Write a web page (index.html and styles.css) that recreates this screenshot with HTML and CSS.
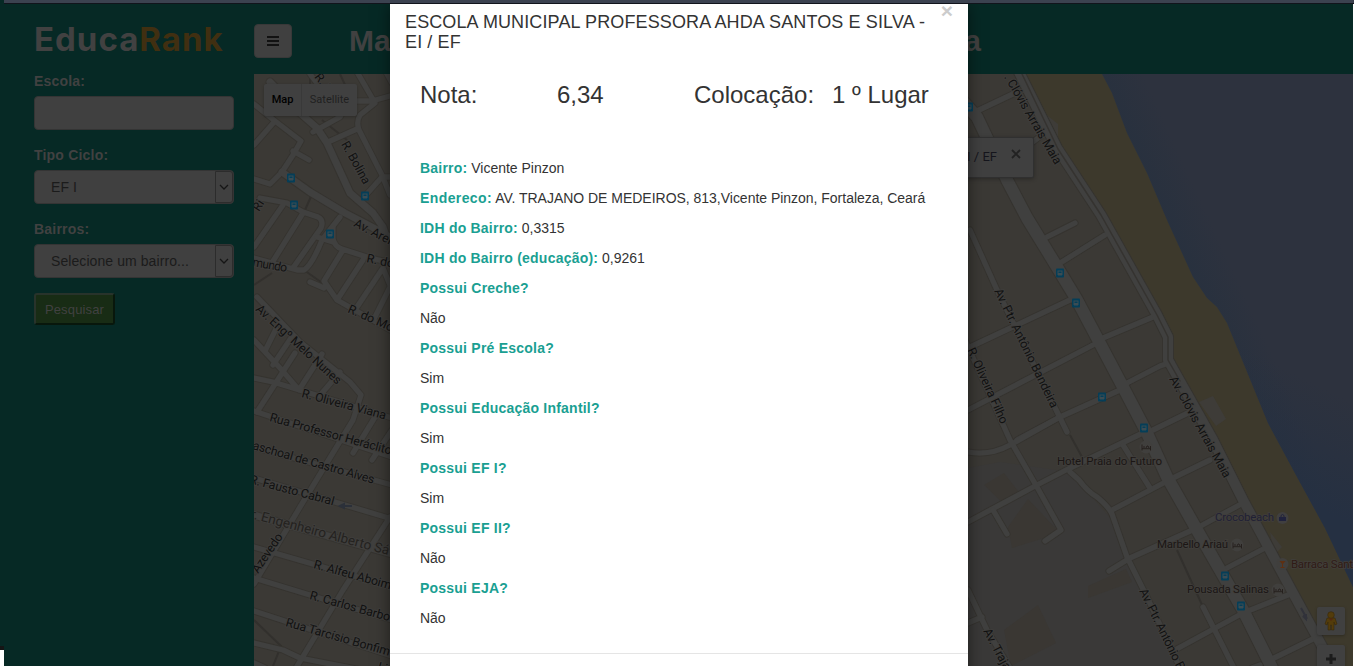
FILE: index.html
```html
<!DOCTYPE html>
<html lang="pt-BR">
<head>
<meta charset="utf-8">
<title>EducaRank</title>
<link rel="stylesheet" href="styles.css">
</head>
<body>
<div class="page">
  <div class="strip"></div>
  <aside class="sidebar">
    <div class="logo">Educa<span class="logo-accent">Rank</span></div>
    <label class="label">Escola:</label>
    <div class="field"></div>
    <label class="label">Tipo Ciclo:</label>
    <div class="field select"><span>EF I</span><i class="arrow"><svg width="10" height="6" viewBox="0 0 10 6"><path d="M1 1l4 4 4-4"/></svg></i></div>
    <label class="label">Bairros:</label>
    <div class="field select"><span>Selecione um bairro...</span><i class="arrow"><svg width="10" height="6" viewBox="0 0 10 6"><path d="M1 1l4 4 4-4"/></svg></i></div>
    <button class="search">Pesquisar</button>
  </aside>
  <main class="main">
    <header class="topbar">
      <div class="menu"><i></i><i></i><i></i></div>
      <h1 class="title"><span>Ma</span><span>a</span></h1>
    </header>
    <div class="map">
      <svg class="map-art" width="1099" height="592" viewBox="254 74 1099 592">
        <defs>
          <linearGradient id="sea" gradientUnits="userSpaceOnUse" x1="1150" y1="260" x2="1215" y2="230">
            <stop offset="0" stop-color="#24303f"/><stop offset="1" stop-color="#2d323e"/>
          </linearGradient>
          <linearGradient id="sea2" gradientUnits="userSpaceOnUse" x1="1300" y1="500" x2="1350" y2="400">
            <stop offset="0" stop-color="#253042" /><stop offset="1" stop-color="#253042" stop-opacity="0"/>
          </linearGradient>
          <g id="bus">
            <rect x="-4" y="-4.5" width="8" height="9" rx="1" fill="#053e58"/>
            <path d="M-2.5-2.5h5v4.500h-1v1h-1v-1h-1v1h-1v-1h-1z" fill="#3b4c53"/>
            <path d="M-1.500-1.500h3v1.500h-3z" fill="#053e58"/>
          </g>
          <g id="bed">
            <circle r="6.500" fill="#403f3d"/>
            <path d="M-4-2.500v6M4.500-1v4.500M-4 1.700h8.500M-2-1v2M0 1l1-2h1l1 2" stroke="#26201e" fill="none"/>
          </g>
          <g id="net">
            <g id="minor">
              <path d="M254 104L275 121L301 141L293 155L282 172L270 184L254 179M293 151L309 160M254 145L275 121"/>
              <path d="M313 132L340 117L347 104M328 142L357 129M357 72L375 103L360 115Q356 122 359 130L382 175L390 195M330 101H372L390 96M386 72L392 83M310 74L322 90"/>
              <path d="M365 196L382 177H392"/>
              <path d="M260 198L287 203L303 212L318 217Q324 220 321 228L293 268M283 205L254 247M303 213L270 266M254 258L297 270H304Q312 265 322 240L340 217"/>
              <path d="M333 228V239Q335 247 342 249L370 258L392 263M317 237L333 242M343 250L324 281L337 300L360 313L392 331M310 282L324 288M363 260L337 300M383 268L357 307M392 283L375 317M383 268L392 290"/>
              <path d="M254 340L280 368L299 390M265 351L276 329M273 365L293 335M299 390L322 354M322 393L340 372M254 378L273 382L392 418M295 353L257 412M257 297L300 342L350 382L361 395L353 420L300 507L254 584"/>
              <path d="M254 411L392 457M254 447L392 485M254 478L392 519M254 547L392 587M254 578L392 620M254 611L392 656M254 643L283 650L300 658L392 676M390 517L343 590L296 668M375 417L353 453M392 430L372 460M254 663L265 668"/>
              <path d="M977 111L1015 93M1033 142L1043 134M1047 237L1075 223M1057 265L1105 235M968 348L1070 300M1103 338L1153 317M968 410L1093 345M1127 383L1160 366L1172 362M1017 440L1060 417L1120 390M1153 430L1190 412"/>
              <path d="M968 522L1037 485L1070 468L1147 431M1112 510L1173 478L1210 460M1109 571L1130 558L1197 528L1243 503M1227 568L1267 547M1173 651L1243 613L1293 593M1270 660L1317 637M968 452Q990 456 1010 445L1060 417"/>
              <path d="M970 230L997 290L1067 432M965 340L1010 440L1037 487L1061 530L1045 541M993 510L1007 534M1070 472L1079 480Q1088 492 1097 497Q1109 507 1112 514L1127 557L1147 597L1180 668M1123 445L1150 488M1203 607L1234 668M968 590L987 630L1010 668M968 623L982 617M1260 665L1252 668"/>
            </g>
          </g>
        </defs>
        <rect x="254" y="74" width="1100" height="592" fill="#3b3935"/>
        <path d="M968 468L1000 462L1070 472L1112 520L1180 668H968z" fill="#3a3938"/>
        <path d="M984 485l20-12 14 18-12 15zM1008 527l20-28 32 34-48 15zM1088 586l38-17 6 13-44 16zM1004 630l34-25 18 38-45 23z" fill="#3a3733"/>
        <path d="M1020 74H1102L1112 93L1127 133L1147 173L1167 220L1193 277L1207 298L1217 307L1227 323L1268 423L1296 475L1325 528L1353 587V666H1333L1293 593L1213 440L1168 358V337L1105 220L1060 150z" fill="#3d392c"/>
        <path d="M1102 74L1112 93L1127 133L1147 173L1167 220L1193 277L1207 298L1217 307L1227 323L1268 423L1296 475L1325 528L1353 587V74z" fill="url(#sea)"/>
        <path d="M1207 298L1217 307L1227 323L1268 423L1296 475L1325 528L1353 587V250z" fill="url(#sea2)"/>
        <path d="M1043 112l15 12v18l-8-4zM1199 402l14-6 13 23-10 7zM1270 532l12 15-8 8z" fill="#3e3c38"/>
        <path d="M340 74l12 26M304 270l28 20M254 285l18-12M310 74v10M322 120l25 20M305 210l8-18M1070 435l12 22M1177 550l26 57M254 620l27 26-8 20" stroke="#32302d" stroke-width="2" fill="none"/>
        <g fill="none" stroke-linejoin="round" stroke-linecap="round">
          <use href="#net" stroke="#35332f" stroke-width="7"/>
          <g stroke="#35332f" stroke-width="9"><path d="M270 82L300 113L317 128L327 143L350 193L373 213L383 227L386 236M282 172L310 192L345 213L370 226L392 238M254 515L392 554"/></g>
          <g stroke="#35332f" stroke-width="14"><path d="M960 98L977 117L1007 180L1027 218L1057 267L1077 300L1123 387L1147 433L1167 477L1197 530L1243 610L1272 668"/><path d="M1018 70L1057 148L1101 215L1157 315L1168 337V360L1213 440L1243 500L1293 593L1335 670" stroke-width="12"/></g>
          <use href="#net" stroke="#40403f" stroke-width="5.300"/>
          <g stroke="#40403f" stroke-width="7"><path d="M270 82L300 113L317 128L327 143L350 193L373 213L383 227L386 236M282 172L310 192L345 213L370 226L392 238M254 515L392 554"/></g>
          <g stroke="#40403f" stroke-width="12"><path d="M960 98L977 117L1007 180L1027 218L1057 267L1077 300L1123 387L1147 433L1167 477L1197 530L1243 610L1272 668"/><path d="M1018 70L1057 148L1101 215L1157 315L1168 337V360L1213 440L1243 500L1293 593L1335 670" stroke-width="10"/></g>
          <path d="M1022 74L1058 149L1101 215L1157 315L1168 337V360L1180 381" stroke="#353330" stroke-width="1.500"/>
        </g>
        <g class="street">
          <text transform="translate(314 77) rotate(52)">R. M</text>
          <text transform="translate(341 144) rotate(61)" textLength="47">R. Bolina</text>
          <text transform="translate(259 212) rotate(-58)">Ri</text>
          <text transform="translate(353 226) rotate(27)">Av. Areia</text>
          <text transform="translate(366 262) rotate(12)">R. do</text>
          <text transform="translate(252 266) rotate(10)" textLength="35">mundo</text>
          <text transform="translate(347 312) rotate(24)">R. do Mo</text>
          <text transform="translate(255 310) rotate(42.500)" textLength="111">Av. Engº Melo Nunes</text>
          <text transform="translate(301 397) rotate(15)" textLength="87">R. Oliveira Viana</text>
          <text transform="translate(269 421) rotate(15.500)" textLength="126">Rua Professor Heráclito</text>
          <text transform="translate(252 449) rotate(16)" textLength="126">aschoal de Castro Alves</text>
          <text transform="translate(249 483) rotate(15)" textLength="87">R. Fausto Cabral</text>
          <text class="light" transform="translate(250 518) rotate(15)" textLength="143">r. Engenheiro Alberto Sá</text>
          <text transform="translate(258 574) rotate(-56)" textLength="45">Azevedo</text>
          <text transform="translate(313 568) rotate(15.500)" textLength="80">R. Alfeu Aboim</text>
          <text transform="translate(309 599) rotate(15.500)" textLength="83">R. Carlos Barbo</text>
          <text transform="translate(285 626) rotate(16)" textLength="108">Rua Tarcísio Bonfim</text>
          <text transform="translate(377 670) rotate(16)">Lic</text>
          <text transform="translate(1004 77) rotate(60)" textLength="102">. Clóvis Arrais Maia</text>
          <text transform="translate(994 291) rotate(64)" textLength="131">Av. Ptr. Antônio Bandeira</text>
          <text transform="translate(967 350) rotate(65.500)" textLength="82">R. Oliveira Filho</text>
          <text transform="translate(1169 379) rotate(61)" textLength="114">Av. Clóvis Arrais Maia</text>
          <text transform="translate(1139 591) rotate(64)" textLength="89">Av. Ptr. Antônio B</text>
          <text transform="translate(983 631) rotate(62)" textLength="52">Av. Trajan</text>
        </g>
        <path d="M340 506h12M340 506l4-2v4z" stroke="#2b3039" stroke-width="2"/>
        <path d="M1301 608l5 9-3-1 3 3v-5" stroke="#31323a" stroke-width="2" fill="none"/>
        <use href="#bus" x="291" y="178"/><use href="#bus" x="294" y="205"/><use href="#bus" x="365" y="196"/><use href="#bus" x="330" y="234"/>
        <use href="#bus" x="969" y="107"/><use href="#bus" x="1060" y="273"/><use href="#bus" x="1076" y="303"/><use href="#bus" x="1102" y="397"/><use href="#bus" x="1144" y="428"/><use href="#bus" x="1225" y="576"/><use href="#bus" x="1241" y="606"/>
        <use href="#bed" x="1146" y="447"/><use href="#bed" x="1237" y="545"/><use href="#bed" x="1278" y="590"/>
        <circle cx="1282.500" cy="518" r="6" fill="#403f3f"/><path d="M1279 517h7v4h-7z" fill="#20223d"/><path d="M1281 517v-1.500q1.500-2 3 0v1.500" stroke="#20223d" fill="none"/>
        <circle cx="1282.500" cy="564" r="6" fill="#403f3d"/><path d="M1279.500 561h6l-2.500 3v3h1.500v1h-4v-1h1.500v-3z" fill="#5e3012"/>
        <g class="place">
          <text x="1057" y="465" textLength="105">Hotel Praia do Futuro</text>
          <text x="1215" y="521" textLength="59" class="shop">Crocobeach</text>
          <text x="1157" y="548" textLength="71">Marbello Ariaú</text>
          <text x="1291" y="568" class="food" textLength="62">Barraca Sant</text>
          <text x="1187" y="593" textLength="82">Pousada Salinas</text>
        </g>
      </svg>
      <div class="map-type"><b>Map</b><span>Satellite</span></div>
      <div class="bubble"><span>EI / EF</span><svg width="10" height="10" viewBox="0 0 10 10"><path d="M1 1l8 8M9 1l-8 8"/></svg></div>
      <div class="controls">
        <div class="control"><svg width="14" height="20" viewBox="0 0 14 20"><g fill="#533c0b" stroke="#37280b" stroke-width=".6"><path d="M3 7h8l2 6-2 1-1-3v8H7.500v-5h-1v5H4v-8l-1 3-2-1z"/><circle cx="7" cy="4" r="3.300"/></g><path d="M4.500 7.500h5L7 10z" fill="#552711"/></svg></div>
        <div class="control"><svg width="12" height="12" viewBox="0 0 12 12"><path d="M6 1v10M1 6h10" stroke="#1b1b1b" stroke-width="3"/></svg></div>
      </div>
    </div>
  </main>
  <div class="edge"></div>
  <section class="modal">
    <div class="modal-head">
      <h4 class="school">ESCOLA MUNICIPAL PROFESSORA AHDA SANTOS E SILVA - EI / EF</h4>
      <span class="close">×</span>
    </div>
    <div class="modal-body">
      <div class="score"><span>Nota:</span><span>6,34</span><span>Colocação:</span><span>1 º Lugar</span></div>
      <p><b>Bairro:</b> Vicente Pinzon</p>
      <p><b class="wide">Endereco:</b> AV. TRAJANO DE MEDEIROS, 813,Vicente Pinzon, Fortaleza, Ceará</p>
      <p><b>IDH do Bairro:</b> 0,3315</p>
      <p><b>IDH do Bairro (educação):</b> 0,9261</p>
      <p><b>Possui Creche?</b></p>
      <p>Não</p>
      <p><b>Possui Pré Escola?</b></p>
      <p>Sim</p>
      <p><b>Possui Educação Infantil?</b></p>
      <p>Sim</p>
      <p><b>Possui EF I?</b></p>
      <p>Sim</p>
      <p><b>Possui EF II?</b></p>
      <p>Não</p>
      <p><b>Possui EJA?</b></p>
      <p>Não</p>
    </div>
    <div class="modal-foot"></div>
  </section>
</div>
</body>
</html>
```
FILE: styles.css
```css
* { box-sizing: border-box; }
body { margin: 0; font-family: "Liberation Sans", Arial, sans-serif; font-size: 14px; line-height: 20px; color: #333; }
.page { position: relative; width: 1354px; height: 666px; overflow: hidden; display: grid; grid-template-columns: 254px 1099px; background: #062925; }
.strip { position: absolute; left: 4px; right: 0; top: 0; height: 4px; background: #3b4250; border-bottom: 1px solid #11141c; z-index: 5; }
.edge { position: absolute; z-index: 4; right: 0; top: 4px; width: 1px; height: 662px; background: #fff; }
.page::after { content: ""; position: absolute; left: 0; bottom: 0; width: 4px; height: 16px; background: #fff; border-top: 4px solid #151515; }

.sidebar { padding: 20px 20px 0 34px; display: flex; flex-direction: column; align-items: stretch; }
.logo { height: 40px; line-height: 39px; font-family: Inter, sans-serif; font-weight: 700; font-size: 33px; letter-spacing: 1px; color: #414141; white-space: nowrap; }
.logo-accent { color: #402f11; }
.label { font-weight: bold; letter-spacing: .2px; color: #414141; height: 20px; margin: 11px 0 5px; }
.field { height: 34px; background: #404040; border: 1px solid #343434; border-radius: 4px; margin-bottom: 4px; }
.select { display: flex; justify-content: space-between; color: #1b1b1b; line-height: 32px; padding-left: 16px; letter-spacing: .08px; }
.arrow { width: 18px; border: 1px solid #2c2c2c; border-radius: 0 3px 3px 0; display: flex; align-items: center; justify-content: center; }
.arrow svg { fill: none; stroke: #151515; stroke-width: 1.3; }
.search { width: 81px; height: 32px; margin-top: 11px; padding: 0; background: #182c15; border: 2px solid; border-color: #28332b #08170c #08170c #28332b; border-radius: 3px; color: #414141; font: 13px "Liberation Sans", Arial, sans-serif; letter-spacing: .15px; }

.topbar { height: 74px; display: flex; padding-top: 24px; }
.menu { width: 38px; height: 34px; background: #404040; border: 1px solid #383838; border-radius: 4px; display: flex; flex-direction: column; gap: 2px; align-items: center; justify-content: center; }
.menu i { width: 12px; height: 2px; background: #121212; }
.title { margin: 0 0 0 57px; width: 632px; display: flex; justify-content: space-between; font-size: 30px; line-height: 34px; color: #414141; }
.map { position: relative; height: 592px; overflow: hidden; }
.map-art { display: block; }
.street { font: 12.3px Roboto, sans-serif; fill: #111; stroke: #3f3e3c; stroke-width: 2px; paint-order: stroke; }
.light { font-size: 13.5px; fill: #24221f; }
.place { font: 11.5px Roboto, sans-serif; fill: #1b1615; stroke: #403e3b; stroke-width: 1.5px; paint-order: stroke; }
.shop { fill: #1f2035; }
.food { fill: #301b15; }
.map-type { position: absolute; left: 10px; top: 10px; height: 32px; display: flex; background: #404040; border-radius: 2px; box-shadow: 0 1px 3px rgba(0,0,0,.25); font: 11px/32px Roboto, sans-serif; color: #202020; }
.map-type b { width: 38px; text-align: center; font-weight: 500; color: #000; border-right: 1px solid #393939; }
.map-type span { width: 55px; text-align: center; }
.bubble { position: absolute; left: 600px; width: 180px; top: 63px; height: 41px; background: #404040; border: 1px solid #303030; border-radius: 2px; box-shadow: 0 1px 4px rgba(0,0,0,.3); display: flex; justify-content: flex-end; gap: 14px; padding: 11px 12px 0 0; font: 13px/15px Roboto, sans-serif; color: #15151c; }
.bubble svg { stroke: #222; stroke-width: 1.8; }
.controls { position: absolute; right: 8px; top: 533px; display: flex; flex-direction: column; gap: 10px; }
.control { width: 28px; height: 28px; background: #404040; border-radius: 2px; display: flex; align-items: center; justify-content: center; box-shadow: 0 1px 3px rgba(0,0,0,.25); }

.modal { position: absolute; z-index: 3; left: 390px; top: 0; width: 578px; height: 700px; background: #fff; box-shadow: 0 5px 15px rgba(0,0,0,.5); }
.modal-head { display: flex; justify-content: space-between; padding: 12px 15px 0; height: 52px; }
.school { margin: 0; width: 530px; font-size: 18px; line-height: 20px; font-weight: normal; letter-spacing: .12px; }
.close { font-size: 21px; line-height: 21px; font-weight: bold; color: #ccc; margin-top: -12px; }
.modal-body { padding: 30px 30px 0; height: 601px; }
.score { display: grid; grid-template-columns: 137px 137px 138px auto; font-size: 24px; line-height: 26px; height: 76px; white-space: nowrap; }
.modal-body p { margin: 0 0 10px; white-space: nowrap; letter-spacing: -.02px; }
.modal-body b { color: #1a9f92; letter-spacing: .22px; }
.modal-body .wide { letter-spacing: .4px; }
.modal-foot { border-top: 1px solid #e5e5e5; }
```
